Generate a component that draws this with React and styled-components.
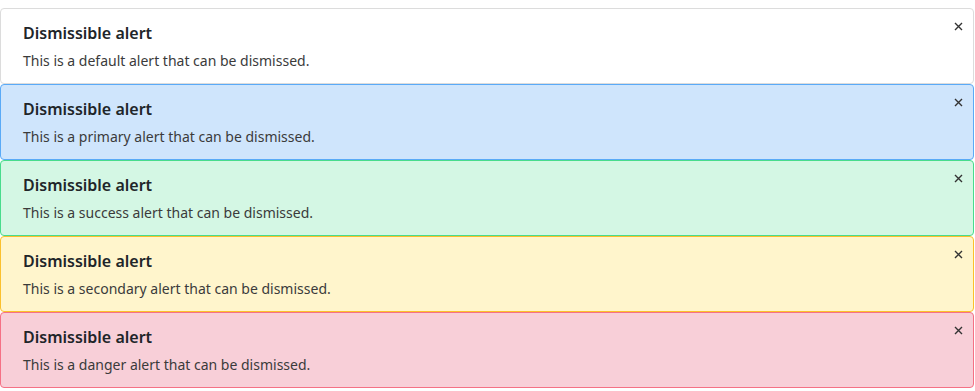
import React from 'react'
import styled, { createGlobalStyle } from 'styled-components'

const GlobalStyle = createGlobalStyle`
  body {
    margin: 0;
    background: #fff;
    font-family: 'Noto Sans', 'Open Sans', sans-serif;
  }
`

const tones = {
  default: { bg: '#ffffff', border: '#dcdcdc' },
  primary: { bg: '#cfe5fc', border: '#5aaaf7' },
  success: { bg: '#d4f7e4', border: '#48dc8c' },
  secondary: { bg: '#fff5cc', border: '#fbc02d' },
  danger: { bg: '#f8cfd8', border: '#f57185' },
}

const alerts = [
  { tone: 'default', name: 'default' },
  { tone: 'primary', name: 'primary' },
  { tone: 'success', name: 'success' },
  { tone: 'secondary', name: 'secondary' },
  { tone: 'danger', name: 'danger' },
]

const List = styled.div`
  display: flex;
  flex-direction: column;
  padding: 8px 1px 0 0;
`

const Alert = styled.div`
  position: relative;
  box-sizing: border-box;
  height: 76px;
  padding: 13px 40px 0 22px;
  background: ${p => tones[p.$tone].bg};
  border: 1px solid ${p => tones[p.$tone].border};
  border-radius: 4px;
`

const Title = styled.div`
  font-size: 16px;
  font-weight: 600;
  color: #212529;
  line-height: 22px;
`

const Text = styled.div`
  margin-top: 7px;
  font-size: 14px;
  color: #3b3b3b;
  line-height: 20px;
`

const Close = styled.button`
  position: absolute;
  top: 9px;
  right: 7px;
  border: 0;
  background: transparent;
  padding: 0;
  width: 16px;
  height: 16px;
  display: flex;
  align-items: center;
  justify-content: center;
  color: #333;
  cursor: pointer;
`

export default function App() {
  return (
    <>
      <GlobalStyle />
      <List>
        {alerts.map(a => (
          <Alert key={a.name} $tone={a.tone}>
            <Title>Dismissible alert</Title>
            <Text>This is a {a.name} alert that can be dismissed.</Text>
            <Close aria-label="Close">
              <svg width="9" height="9" viewBox="0 0 9 9">
                <path d="M1 1L8 8M8 1L1 8" stroke="currentColor" strokeWidth="1.4" />
              </svg>
            </Close>
          </Alert>
        ))}
      </List>
    </>
  )
}
